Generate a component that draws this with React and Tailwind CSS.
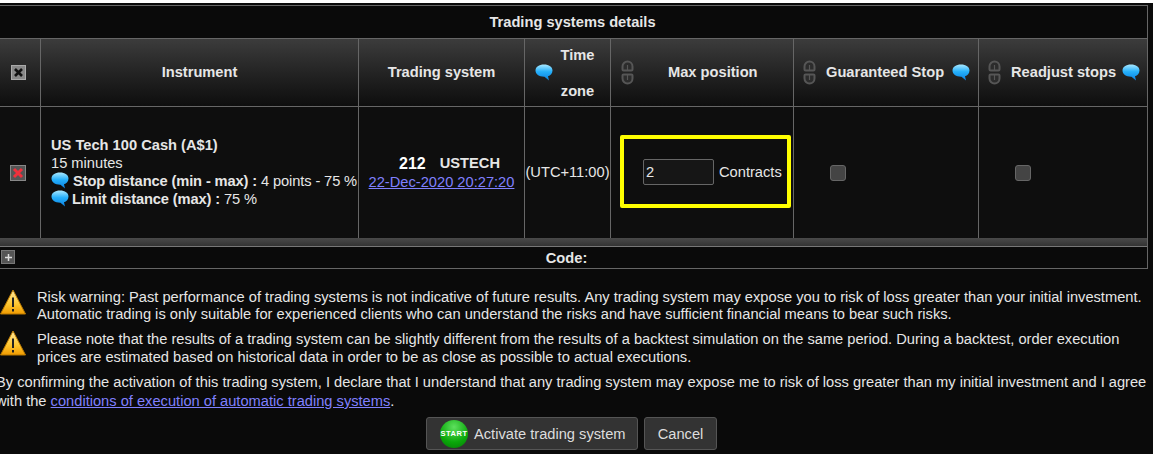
import { useId } from "react";

function Bubble({ className = "" }) {
  const id = useId();
  return (
    <svg width="18" height="17" viewBox="0 0 18 17" className={`shrink-0 ${className}`}>
      <defs>
        <linearGradient id={id} x1="0" y1="0" x2="0" y2="1">
          <stop offset="0" stopColor="#a8e8ff" />
          <stop offset="0.45" stopColor="#25b0fb" />
          <stop offset="1" stopColor="#0a7fe0" />
        </linearGradient>
      </defs>
      <path
        d="M9 0.500C14 0.500 17.500 3 17.500 6.500C17.500 9.500 15.500 11.500 13 12.200L14 16.500L9.500 12.700C4 12.800 0.500 10.200 0.500 6.500C0.500 3 4 0.500 9 0.500Z"
        fill={`url(#${id})`}
      />
    </svg>
  );
}

function LinkIcon() {
  return (
    <svg width="13" height="25" viewBox="0 0 13 25" fill="none" className="shrink-0" stroke="#565656">
      <path d="M1.500 9.500V6.500a5 5 0 0 1 10 0V9.500a1 1 0 0 1-1 1H2.500a1 1 0 0 1-1-1Z" strokeWidth="2" fill="#2c2c2c" />
      <path d="M6.500 5V10" strokeWidth="1.200" />
      <path d="M1.500 15.500v3a5 5 0 0 0 10 0v-3a1 1 0 0 0-1-1H2.500a1 1 0 0 0-1 1Z" strokeWidth="2" fill="#2c2c2c" />
      <path d="M6.500 15v5" strokeWidth="1.200" />
    </svg>
  );
}

function Warning() {
  const id = useId();
  return (
    <svg width="26" height="26" viewBox="0 0 26 26" className="shrink-0">
      <defs>
        <linearGradient id={id} x1="0" y1="0" x2="0" y2="1">
          <stop offset="0" stopColor="#ffe9a0" />
          <stop offset="0.6" stopColor="#ffc62e" />
          <stop offset="1" stopColor="#f09a00" />
        </linearGradient>
      </defs>
      <path d="M13 1L25.500 25H0.500Z" fill={`url(#${id})`} stroke="#b87800" strokeWidth="1" strokeLinejoin="round" />
      <path d="M13 8.500V18" stroke="#222" strokeWidth="2" />
      <rect x="12" y="20" width="2" height="2.500" fill="#222" />
    </svg>
  );
}

function Cell({ children, className = "" }) {
  return (
    <div className={`flex items-center border-r border-[#666] ${className}`}>
      {children}
    </div>
  );
}

function Checkbox() {
  return <div className="h-4 w-4 rounded-[3px] border border-[#666] bg-[#444]" />;
}

const grid = "grid grid-cols-[41px_318px_166px_86px_183px_185px_168px]";

export default function App() {
  return (
    <div className="h-[454px] w-[1153px] overflow-hidden bg-[#0a0a0a] font-['Liberation_Sans',Arial,sans-serif] text-[14.67px] text-[#e6e6e6]">
      <div className="h-[3px] bg-white" />
      <div className="pt-[2px]">
        <div className="w-[1148px] border-r border-[#666]">
          <div className="flex h-[33px] items-center justify-center border-t border-[#666] pr-[2px] font-bold">
            Trading systems details
          </div>

          <div className={`${grid} h-[69px] grid-rows-[67px] border-y border-[#666] bg-gradient-to-b from-[#3c3c3c] to-[#0e0e0e] font-bold`}>
            <Cell className="justify-center pr-[4px]">
              <div className="flex h-[15px] w-[15px] items-center justify-center border border-[#aaa] bg-[#888] text-[#111]">
                <svg width="11" height="11" viewBox="0 0 11 11">
                  <path d="M2 2L9 9M9 2L2 9" stroke="#111" strokeWidth="2.600" />
                </svg>
              </div>
            </Cell>
            <Cell className="justify-center pb-[1px]">Instrument</Cell>
            <Cell className="justify-center pb-[1px]">Trading system</Cell>
            <Cell className="pl-[10px]">
              <Bubble />
              <div className="w-[47px] pl-[2px] text-center leading-[36px]">
                Time
                <br />
                zone
              </div>
            </Cell>
            <Cell className="pl-[10px]">
              <LinkIcon />
              <span className="ml-[34px] mb-[1px]">Max position</span>
            </Cell>
            <Cell className="pl-[9px]">
              <LinkIcon />
              <span className="ml-[10px] mb-[1px] whitespace-nowrap">Guaranteed Stop</span>
              <Bubble className="ml-[8px]" />
            </Cell>
            <Cell className="border-r-0 pl-[9px]">
              <LinkIcon />
              <span className="ml-[10px] mb-[1px] whitespace-nowrap">Readjust stops</span>
              <Bubble className="ml-[6px]" />
            </Cell>
          </div>

          <div className={`${grid} h-[131px] bg-[#0e0e0e]`}>
            <Cell className="justify-center pr-[4px]">
              <div className="flex h-[16px] w-[16px] items-center justify-center border border-[#888] bg-[#555]">
                <svg width="12" height="12" viewBox="0 0 12 12">
                  <path d="M2 2L10 10M10 2L2 10" stroke="#f0303c" strokeWidth="3" />
                </svg>
              </div>
            </Cell>
            <Cell className="pl-[10px] pb-[2px]">
              <div className="whitespace-nowrap leading-[18px]">
                <div className="font-bold">US Tech 100 Cash (A$1)</div>
                <div>15 minutes</div>
                <div className="flex items-center tracking-[-0.12px]">
                  <Bubble />
                  <b className="ml-[4px]">Stop distance (min - max) :</b>
                  <span className="ml-[4px]">4 points - 75 %</span>
                </div>
                <div className="flex items-center tracking-[-0.12px]">
                  <Bubble />
                  <b className="ml-[3px]">Limit distance (max) :</b>
                  <span className="ml-[4px]">75 %</span>
                </div>
              </div>
            </Cell>
            <Cell className="justify-center">
              <div className="text-center leading-[19px]">
                <div className="flex justify-center gap-[14px] pl-[16px] font-bold">
                  <span className="text-[16px] text-white">212</span>
                  <span>USTECH</span>
                </div>
                <a href="#" className="whitespace-nowrap text-[#8080ff] underline">
                  22-Dec-2020 20:27:20
                </a>
              </div>
            </Cell>
            <Cell className="justify-center whitespace-nowrap pb-[2px]">(UTC+11:00)</Cell>
            <Cell className="pl-[9px] pb-[2px]">
              <div className="flex h-[73px] w-[171px] items-center rounded-[2px] border-[4px] border-[#ffff00] pl-[19px]">
                <input
                  readOnly
                  value="2"
                  className="h-[26px] w-[71px] rounded-[2px] border border-[#666] bg-[#161616] px-[2px] text-[14.67px] text-[#e6e6e6] outline-none"
                />
                <span className="ml-[5px] whitespace-nowrap">Contracts</span>
              </div>
            </Cell>
            <Cell className="pl-[36px]">
              <Checkbox />
            </Cell>
            <Cell className="border-r-0 pl-[36px]">
              <Checkbox />
            </Cell>
          </div>

          <div className="h-[9px] border-b border-[#777] bg-gradient-to-b from-[#4a4a4a] to-[#333]" />
          <div className="relative flex h-[22px] items-center justify-center border-b border-[#666] pr-[14px] font-bold">
            <div className="absolute left-[1px] top-[3px] flex h-[14px] w-[14px] items-center justify-center border border-[#777] bg-[#555]">
              <svg width="9" height="9" viewBox="0 0 9 9">
                <path d="M4.500 1V8M1 4.500H8" stroke="#ddd" strokeWidth="1.500" />
              </svg>
            </div>
            Code:
          </div>
        </div>
      </div>

      <div className="mt-[20px] flex flex-col gap-[7px]">
        <div className="flex items-start">
          <Warning />
          <p className="ml-[11px] w-[1116px] leading-[17px]">
            Risk warning: Past performance of trading systems is not indicative of future results. Any trading system may expose you to risk of loss greater than your initial investment. Automatic trading is only suitable for experienced clients who can understand the risks and have sufficient financial means to bear such risks.
          </p>
        </div>
        <div className="flex items-start">
          <Warning />
          <p className="ml-[11px] w-[1116px] leading-[18px]">
            Please note that the results of a trading system can be slightly different from the results of a backtest simulation on the same period. During a backtest, order execution prices are estimated based on historical data in order to be as close as possible to actual executions.
          </p>
        </div>
        <p className="-ml-[4px] w-[1158px] leading-[19px]">
          By confirming the activation of this trading system, I declare that I understand that any trading system may expose me to risk of loss greater than my initial investment and I agree with the{" "}
          <a href="#" className="text-[#8080ff] underline">
            conditions of execution of automatic trading systems
          </a>
          .
        </p>
      </div>

      <div className="mt-[6px] ml-[426px] flex gap-[6px]">
        <button className="flex h-[33px] w-[212px] items-center rounded-[3px] border border-[#555] bg-[#333] pl-[13px] text-[#ddd]">
          <span className="flex h-[28px] w-[28px] items-center justify-center rounded-full bg-[radial-gradient(circle_at_50%_25%,#5ee05e,#0aa80a_60%,#067a06)] text-[7.500px] font-bold tracking-[0.5px] text-white">
            START
          </span>
          <span className="ml-[6px]">Activate trading system</span>
        </button>
        <button className="h-[33px] w-[73px] rounded-[3px] border border-[#555] bg-[#333] text-[#ddd]">
          Cancel
        </button>
      </div>
    </div>
  );
}
